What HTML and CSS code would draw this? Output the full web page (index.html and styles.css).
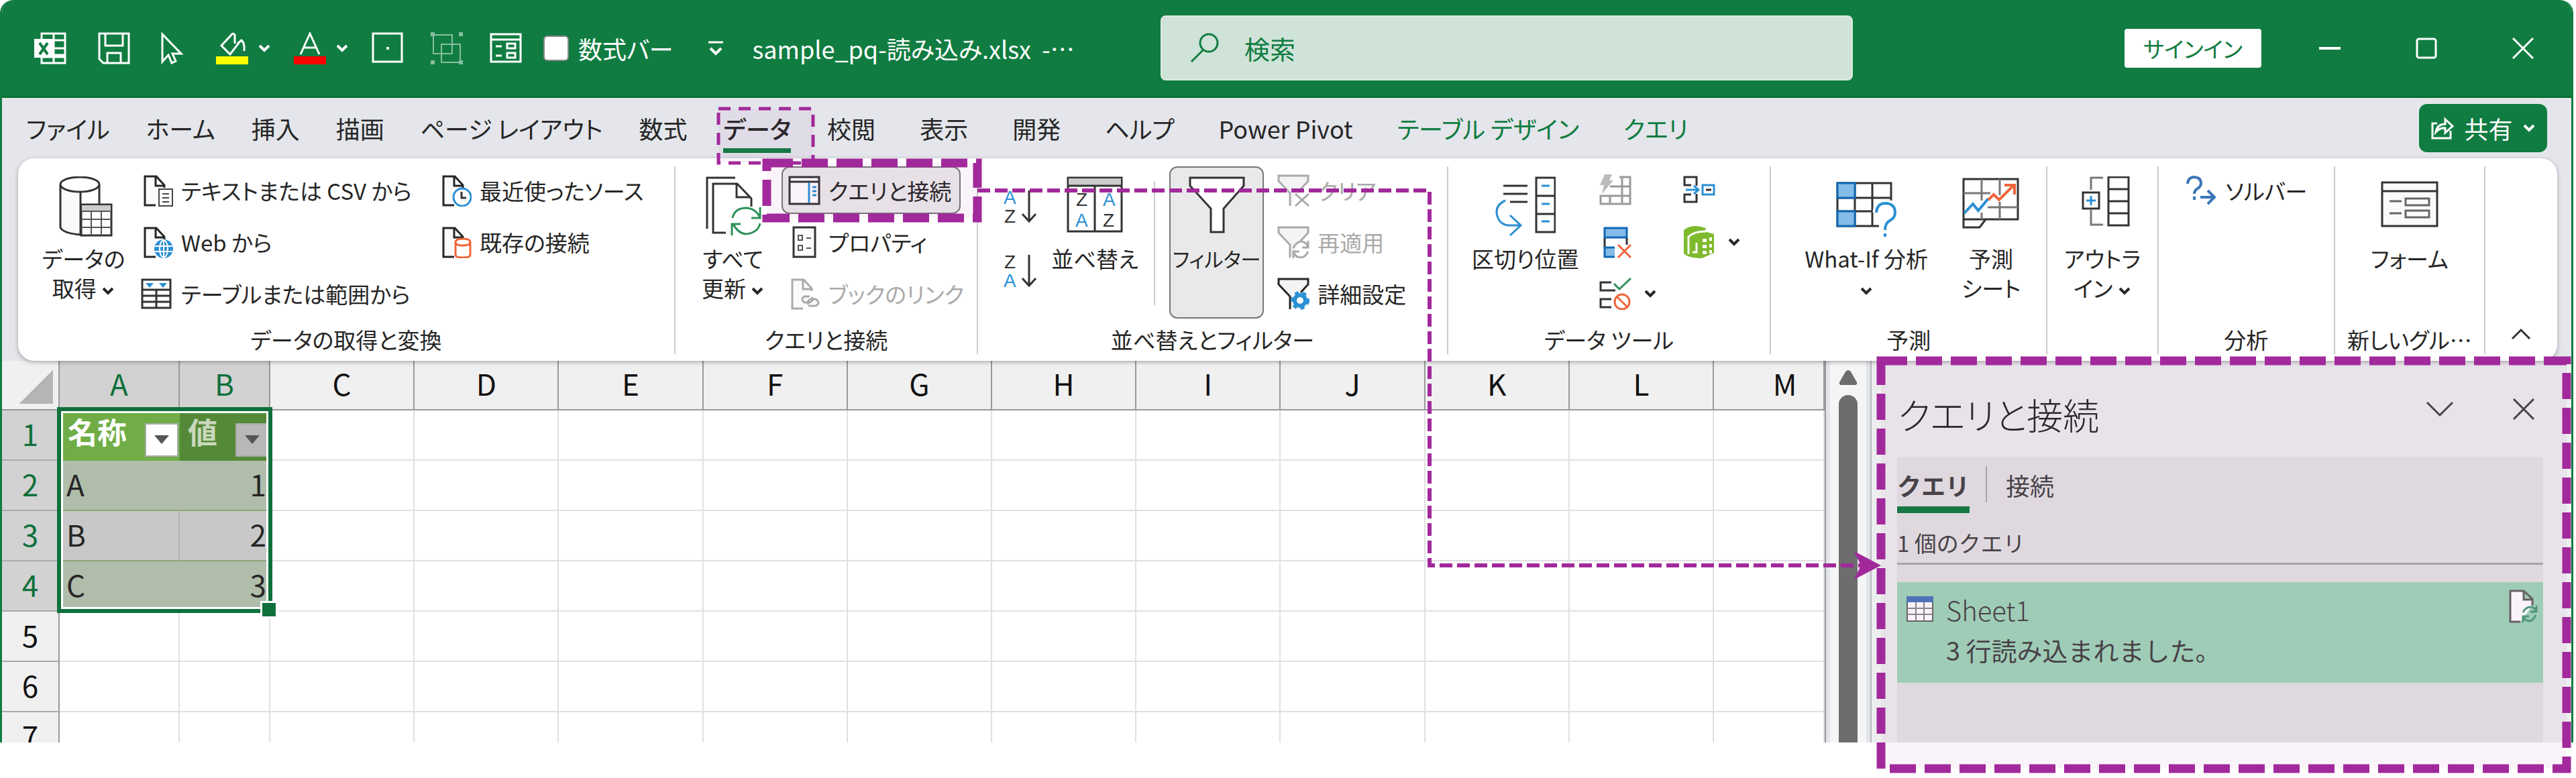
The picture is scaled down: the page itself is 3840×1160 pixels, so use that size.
FILE: index.html
```html
<!DOCTYPE html>
<html lang="ja">
<head>
    <meta charset="UTF-8">
    <meta name="viewport" content="width=device-width, initial-scale=1.0">
    <title>sample_pq-読み込み.xlsx</title>
    <link rel="stylesheet" href="styles.css">
</head>
<body>
    <!-- アイコン定義 -->
    <svg class="defs" aria-hidden="true">
        <symbol id="chev" viewBox="0 0 20 14"><path d="M3 3l7 7 7-7" fill="none" stroke="currentColor" stroke-width="4"/></symbol>
        <symbol id="page" viewBox="0 0 48 48"><path d="M22 46H6V3h17l12 13v4M22 3v14h12" fill="#fafafa" stroke="currentColor" stroke-width="3"/></symbol>
        <symbol id="funnel" viewBox="0 0 48 48"><path d="M19 47V28L2 10V2h44v8L35 22" fill="#f4f4f4" stroke="currentColor" stroke-width="3"/></symbol>
    </svg>

    <div class="app">
        <header class="titlebar">
            <div class="quick">
                <svg class="ic" viewBox="0 0 48 48"><path d="M11 2h35v44H11zM29 2v44M11 12h35M29 24h17M29 34h17M11 37h35" fill="none" stroke="#fff" stroke-width="3"/><path d="M0 10h28v28H0z" fill="#fff"/><path d="M8 16l12 17M20 16L8 33" stroke="#107c41" stroke-width="4"/></svg>
                <button class="qb save" aria-label="上書き保存"><svg class="ic" viewBox="0 0 48 48"><path d="M2 2h44v44H8l-6-6zM11 2v18h26V2M14 46V31h20v15" fill="none" stroke="#fff" stroke-width="3"/></svg></button>
                <button class="qb" aria-label="選択"><svg class="ic" viewBox="0 0 48 48"><path d="M8 3v41l9-10 5 12 6-3-5-11h13z" fill="none" stroke="#fff" stroke-width="3"/></svg></button>
                <button class="qb menu" aria-label="塗りつぶしの色"><svg class="ic" viewBox="0 0 48 48"><path d="M28 17V4q-3-4-6 1L8 20l13 13 13-17M32 17l6-5q5 4 4 16" fill="none" stroke="#fff" stroke-width="3"/><path d="M0 36h48v12H0z" fill="#ff0"/></svg><svg class="chev"><use href="#chev"/></svg></button>
                <button class="qb menu" aria-label="フォントの色"><svg class="ic" viewBox="0 0 48 48"><path d="M10 33L24 2l14 31M15 23h18" fill="none" stroke="#fff" stroke-width="3"/><path d="M0 36h48v12H0z" fill="red"/></svg><svg class="chev"><use href="#chev"/></svg></button>
                <button class="qb" aria-label="罫線"><svg class="ic" viewBox="0 0 48 48"><path d="M2 2h43v42H2z" fill="none" stroke="#fff" stroke-width="3"/><path d="M22 22h4v4h-4z" fill="#fff"/></svg></button>
                <button class="qb" aria-label="グループ化"><svg class="ic dim" viewBox="0 0 48 48"><path d="M4 4h28v28H4zM16 18h28v27H16z" fill="none" stroke="#fff" stroke-width="2"/><path d="M0 0h6v6H0zM42 0h6v6h-6zM0 42h6v6H0zM42 42h6v6h-6z" fill="#fff"/></svg></button>
                <button class="qb" aria-label="フォーム"><svg class="ic" viewBox="0 0 48 48"><path d="M2 3h44v41H2zM2 11h44M9 21h9M9 35h9M26 17h12v7H26zM26 31h12v7H26z" fill="none" stroke="#fff" stroke-width="3"/></svg></button>
                <label class="check"><input type="checkbox"> 数式バー</label>
                <button class="qb" aria-label="カスタマイズ"><svg class="ic" viewBox="0 0 48 48"><path d="M13 15h22" stroke="#fff" stroke-width="3"/><path d="M16 24l8 8 8-8" fill="none" stroke="#fff" stroke-width="4"/></svg></button>
                <span class="filename">sample_pq-読み込み.xlsx&nbsp; -…</span>
            </div>
            <div class="search">
                <svg class="ic" viewBox="0 0 48 48"><circle cx="30" cy="16" r="13" fill="none" stroke="#107c41" stroke-width="3"/><path d="M22 26L4 44" stroke="#107c41" stroke-width="3"/></svg>
                <input type="text" placeholder="検索" aria-label="検索">
            </div>
            <div class="window-btns">
                <button class="signin">サインイン</button>
                <button aria-label="最小化"><svg viewBox="0 0 32 32"><path d="M0 16h32" stroke="#fff" stroke-width="4"/></svg></button>
                <button aria-label="最大化"><svg viewBox="0 0 32 32"><rect x="2" y="2" width="28" height="28" rx="3" fill="none" stroke="#fff" stroke-width="3"/></svg></button>
                <button aria-label="閉じる"><svg viewBox="0 0 32 32"><path d="M1 1l30 30M31 1L1 31" stroke="#fff" stroke-width="3"/></svg></button>
            </div>
        </header>

        <nav class="tabs">
            <a href="#">ファイル</a>
            <a href="#">ホーム</a>
            <a href="#">挿入</a>
            <a href="#">描画</a>
            <a href="#">ページ レイアウト</a>
            <a href="#">数式</a>
            <a href="#" class="active">データ</a>
            <a href="#">校閲</a>
            <a href="#">表示</a>
            <a href="#">開発</a>
            <a href="#">ヘルプ</a>
            <a href="#">Power Pivot</a>
            <a href="#" class="ctx">テーブル デザイン</a>
            <a href="#" class="ctx">クエリ</a>
            <button class="share"><svg viewBox="0 0 36 36"><path d="M10 11H3v22h27V22M8 24q2-12 14-12V5l11 10-11 10v-7q-8-1-14 6z" fill="none" stroke="#fff" stroke-width="3"/></svg>共有<svg class="chev"><use href="#chev"/></svg></button>
        </nav>

        <section class="ribbon">
            <div class="group get">
                <div class="tools">
                    <button class="big">
                        <svg viewBox="0 0 90 90"><path d="M10 12v64q4 9 30 11V12M68 12v30" fill="#fafafa" stroke="#333" stroke-width="3"/><ellipse cx="39" cy="12" rx="29" ry="11" fill="#fff" stroke="#333" stroke-width="3"/><path d="M41 42h45v46H41z" fill="#fff" stroke="#333" stroke-width="3"/><path d="M42 43h43v8H42z" fill="#ccc"/><path d="M41 52h45M41 64h45M41 76h45M56 52v36M71 52v36" stroke="#555" stroke-width="2"/></svg>
                        <span>データの<br>取得 <svg class="chev"><use href="#chev"/></svg></span>
                    </button>
                    <div class="col wide">
                        <button class="small"><svg viewBox="0 0 48 48"><use href="#page"/><path d="M27 22h20v25H27zM32 29h10M32 35h10M32 41h10" fill="#fff" stroke="#444" stroke-width="2"/></svg>テキストまたは CSV から</button>
                        <button class="small"><svg viewBox="0 0 48 48"><use href="#page"/><circle cx="34" cy="34" r="14" fill="#2b8fd4"/><path d="M21 30h26M21 38h26M34 20v28" stroke="#fff" stroke-width="2"/><ellipse cx="34" cy="34" rx="6" ry="13" fill="none" stroke="#fff" stroke-width="2"/></svg>Web から</button>
                        <button class="small"><svg viewBox="0 0 48 48"><path d="M2 3h42v42H2zM2 18h42M2 27h42M2 36h42M23 18v27" fill="#fff" stroke="#333" stroke-width="3"/><path d="M7 8h12l-6 7zM27 8h12l-6 7z" fill="#2b8fd4"/></svg>テーブルまたは範囲から</button>
                    </div>
                    <div class="col">
                        <button class="small"><svg viewBox="0 0 48 48"><use href="#page"/><circle cx="34" cy="34" r="13" fill="#fff" stroke="#2b8fd4" stroke-width="3"/><path d="M33 26v9h7" fill="none" stroke="#333" stroke-width="3"/></svg>最近使ったソース</button>
                        <button class="small"><svg viewBox="0 0 48 48"><use href="#page"/><path d="M24 24q0-5 11-5t11 5v19q0 4-11 4t-11-4zq0 5 11 5t11-5" fill="#fff" stroke="#f0653a" stroke-width="3"/></svg>既存の接続</button>
                    </div>
                </div>
                <div class="caption">データの取得と変換</div>
            </div>

            <div class="group query">
                <div class="tools">
                    <button class="big">
                        <svg viewBox="0 0 90 90"><path d="M6 78V2h42M34 84H15V11h36l21 22v12M50 11v20h20" fill="none" stroke="#333" stroke-width="3"/><path d="M44 62q3-15 21-15 14 1 20 15M85 46v16H72M85 70q-3 14-21 16-12-1-19-15M43 88V71h13" fill="none" stroke="#2f9158" stroke-width="3"/></svg>
                        <span>すべて<br>更新 <svg class="chev"><use href="#chev"/></svg></span>
                    </button>
                    <div class="col">
                        <button class="small pressed"><svg viewBox="0 0 48 48"><path d="M2 4h44v40H2z" fill="#fff" stroke="#333" stroke-width="3"/><path d="M2 11h44" stroke="#333" stroke-width="3"/><path d="M31 12v31" stroke="#2b8fd4" stroke-width="3"/><path d="M36 19h6M36 25h6M36 31h6" stroke="#2b8fd4" stroke-width="3"/></svg>クエリと接続</button>
                        <button class="small"><svg viewBox="0 0 48 48"><path d="M8 2h32v44H8z" fill="#fafafa" stroke="#333" stroke-width="3"/><path d="M15 14h6v7h-6zM15 29h6v7h-6zM27 18h7M27 33h7" fill="none" stroke="#555" stroke-width="2"/></svg>プロパティ</button>
                        <button class="small off"><svg viewBox="0 0 48 48"><use href="#page"/><path d="M32 28h-8q-6 4 0 9h8q7-3 3-8M30 42h11q8-4 0-10h-8q-6 3-3 8" fill="none" stroke="#aaa" stroke-width="3"/></svg>ブックのリンク</button>
                    </div>
                </div>
                <div class="caption">クエリと接続</div>
            </div>

            <div class="group sort">
                <div class="tools">
                    <div class="az">
                        <button aria-label="昇順"><svg viewBox="0 0 48 48"><text x="0" y="20" class="blue">A</text><text x="1" y="48">Z</text><path d="M38 0v46M28 35l10 11 10-11" fill="none" stroke="#333" stroke-width="3"/></svg></button>
                        <button aria-label="降順"><svg viewBox="0 0 48 48"><text x="1" y="20">Z</text><text x="0" y="48" class="blue">A</text><path d="M38 0v46M28 35l10 11 10-11" fill="none" stroke="#333" stroke-width="3"/></svg></button>
                    </div>
                    <button class="big sortbtn">
                        <svg viewBox="0 0 90 90"><path d="M5 2h80v80H5z" fill="#fff" stroke="#333" stroke-width="3"/><path d="M6 3h78v10H6z" fill="#ccc"/><path d="M5 14h80M45 14v68" stroke="#333" stroke-width="3"/><text x="17" y="44">Z</text><text x="16" y="75" class="blue">A</text><text x="57" y="44" class="blue">A</text><text x="57" y="75">Z</text></svg>
                        <span>並べ替え</span>
                    </button>
                    <i class="rule"></i>
                    <button class="big filter">
                        <svg viewBox="0 0 90 90"><path d="M5 2h80v12L55 48v35H36V48L5 14z" fill="#fff" stroke="#333" stroke-width="3"/></svg>
                        <span>フィルター</span>
                    </button>
                    <div class="col">
                        <button class="small off"><svg viewBox="0 0 48 48"><use href="#funnel"/><path d="M27 29l20 18M47 29L27 47" stroke="#aaa" stroke-width="3"/></svg>クリア</button>
                        <button class="small off"><svg viewBox="0 0 48 48"><use href="#funnel"/><path d="M24 33q4-10 12-10 8 1 9 8M46 22v10h-9M46 38q-4 9-12 9-8-1-9-8M24 48V38h9" fill="none" stroke="#aaa" stroke-width="3"/></svg>再適用</button>
                        <button class="small"><svg viewBox="0 0 48 48"><use href="#funnel"/><circle cx="34" cy="34" r="8" fill="#fff" stroke="#2b8fd4" stroke-width="6"/><circle cx="34" cy="34" r="12" fill="none" stroke="#2b8fd4" stroke-width="4" stroke-dasharray="6 6"/></svg>詳細設定</button>
                    </div>
                </div>
                <div class="caption">並べ替えとフィルター</div>
            </div>

            <div class="group data">
                <div class="tools">
                    <button class="big">
                        <svg viewBox="0 0 90 90"><path d="M61 2h28v81H61zM61 29h28M61 56h28" fill="#fff" stroke="#333" stroke-width="3"/><path d="M12 14h36M12 26h36M22 38h26" stroke="#333" stroke-width="3"/><path d="M69 14h12M69 41h12M69 67h12" stroke="#2b8fd4" stroke-width="3"/><path d="M15 36Q1 42 2 55q3 17 18 18h18M22 58l16 15-16 15" fill="none" stroke="#2b8fd4" stroke-width="3"/></svg>
                        <span>区切り位置</span>
                    </button>
                    <div class="col marks">
                        <button class="small" aria-label="フラッシュ フィル"><svg viewBox="0 0 48 48"><path d="M2 32h44v12H2zM30 4h16v40M16 18h30M16 32v12M34 4v40" fill="none" stroke="#999" stroke-width="3"/><path d="M8 0h11l-4 9h6L4 29l3-13H1z" fill="#bbb"/></svg></button>
                        <button class="small" aria-label="重複の削除"><svg viewBox="0 0 48 48"><path d="M8 3h33v14H8z" fill="#85bbe8" stroke="#1068b5" stroke-width="3"/><path d="M8 18v14M41 18v10" stroke="#333" stroke-width="3"/><path d="M23 32H8v14h15" fill="#85bbe8" stroke="#1068b5" stroke-width="3"/><path d="M28 28l19 19M47 28L28 47" stroke="#f0653a" stroke-width="3"/></svg></button>
                        <button class="small" aria-label="データの入力規則"><svg viewBox="0 0 48 48"><path d="M18 7H2v12h22M18 32H2v12h16" fill="none" stroke="#333" stroke-width="3"/><path d="M22 9l8 8L47 1" fill="none" stroke="#2f9158" stroke-width="3"/><circle cx="34" cy="36" r="11" fill="#fff" stroke="#f0653a" stroke-width="3"/><path d="M26 28l16 16" stroke="#f0653a" stroke-width="3"/></svg><svg class="chev"><use href="#chev"/></svg></button>
                    </div>
                    <div class="col">
                        <button class="small" aria-label="統合"><svg viewBox="0 0 48 48"><path d="M20 17V4H2v12h10M20 29v12H2V30h10" fill="none" stroke="#333" stroke-width="3"/><path d="M4 23h18M16 17l7 6-7 6M29 16h17v14H29z" fill="none" stroke="#2b8fd4" stroke-width="3"/><path d="M34 23h8" stroke="#333" stroke-width="3"/></svg></button>
                        <button class="small" aria-label="データ モデル"><svg viewBox="0 0 48 48"><path d="M1 6Q14-4 34 3l-2 5 14 4v28L28 48Q8 48 1 41z" fill="#7fba2c"/><path d="M8 42V16q8-8 26-8M14 39h6V25" fill="none" stroke="#fff" stroke-width="3"/><path d="M29 19h6v5h-6zM39 17h4v5h-4zM29 28h6v5h-6zM39 27h4v5h-4zM29 37h6v5h-6zM39 36h4v5h-4z" fill="#fff"/></svg><svg class="chev"><use href="#chev"/></svg></button>
                    </div>
                </div>
                <div class="caption">データ ツール</div>
            </div>

            <div class="group forecast">
                <div class="tools">
                    <button class="big whatif">
                        <svg viewBox="0 0 90 90"><path d="M2 10h80v64H2z" fill="#fff"/><path d="M82 36V10H2v64h62M28 10v64M54 10v64M2 32h80M2 52h54" fill="none" stroke="#333" stroke-width="3"/><path d="M2 10h26v22H2zM2 52h26v22H2z" fill="#85bbe8" stroke="#1068b5" stroke-width="3"/><path d="M60 54q1-14 14-14 14 1 14 14 0 8-8 12-7 4-7 14" fill="none" stroke="#fff" stroke-width="11"/><path d="M60 54q1-14 14-14 14 1 14 14 0 8-8 12-7 4-7 14M73 85v5" fill="none" stroke="#2b8fd4" stroke-width="4"/></svg>
                        <span>What-If 分析<br><svg class="chev"><use href="#chev"/></svg></span>
                    </button>
                    <button class="big sheetbtn">
                        <svg viewBox="0 0 90 90"><path d="M4 4h81v60H4z" fill="#fff" stroke="#333" stroke-width="3"/><path d="M4 25h40M40 46h45M31 4v32M31 54v10M58 4v24M58 38v26" stroke="#777" stroke-width="3"/><path d="M4 64v12h24l9-12" fill="none" stroke="#333" stroke-width="3"/><path d="M5 55l13-14 8 10 15-18" fill="none" stroke="#2b8fd4" stroke-width="4"/><path d="M41 35l8-8 8 8 22-22M65 13h15v14" fill="none" stroke="#f0653a" stroke-width="4"/></svg>
                        <span>予測<br>シート</span>
                    </button>
                </div>
                <div class="caption">予測</div>
            </div>

            <div class="group center">
                <div class="tools">
                    <button class="big">
                        <svg viewBox="0 0 90 90"><path d="M54 1h30v72H54zM54 19h30M54 37h30M54 55h30" fill="#fff" stroke="#333" stroke-width="3"/><path d="M46 2H28v18M28 50v22h18" fill="none" stroke="#777" stroke-width="3"/><path d="M16 24h24v24H16z" fill="#fff" stroke="#333" stroke-width="3"/><path d="M21 36h14M28 29v14" stroke="#2b8fd4" stroke-width="3"/></svg>
                        <span>アウトラ<br>イン <svg class="chev"><use href="#chev"/></svg></span>
                    </button>
                </div>
                <div class="caption"></div>
            </div>

            <div class="group solver">
                <div class="tools">
                    <div class="col">
                        <button class="small"><svg viewBox="0 0 48 48"><path d="M3 14q1-10 10-10 10 1 10 9 0 5-5 8-5 3-5 8M13 33v5M22 34h20M33 24l10 10-10 10" fill="none" stroke="#3b76b8" stroke-width="4"/></svg>ソルバー</button>
                    </div>
                </div>
                <div class="caption">分析</div>
            </div>

            <div class="group center">
                <div class="tools">
                    <button class="big">
                        <svg viewBox="0 0 90 90"><path d="M4 9h82v65H4zM4 22h82" fill="#fafafa" stroke="#333" stroke-width="3"/><path d="M15 37h18M15 55h18M39 33h35v10H39zM39 51h35v10H39z" fill="none" stroke="#666" stroke-width="3"/></svg>
                        <span>フォーム</span>
                    </button>
                </div>
                <div class="caption">新しいグル…</div>
            </div>

            <div class="group collapse">
                <button aria-label="リボンを折りたたむ"><svg viewBox="0 0 30 20"><path d="M2 17L15 4l13 13" fill="none" stroke="#333" stroke-width="3"/></svg></button>
            </div>
        </section>

        <main class="work">
            <div class="sheet">
                <table>
                    <colgroup><col class="c-num"><col class="c-a"><col class="c-b"><col><col><col><col><col><col><col><col><col><col><col class="c-m"></colgroup>
                    <thead>
                        <tr><th class="corner"></th><th class="on">A</th><th class="on">B</th><th>C</th><th>D</th><th>E</th><th>F</th><th>G</th><th>H</th><th>I</th><th>J</th><th>K</th><th>L</th><th class="last">M</th></tr>
                    </thead>
                    <tbody>
                        <tr class="head"><th class="on">1</th><td><div>名称<button aria-label="名称フィルター"></button></div></td><td class="b"><div>値<button aria-label="値フィルター"></button></div></td><td></td><td></td><td></td><td></td><td></td><td></td><td></td><td></td><td></td><td></td><td></td></tr>
                        <tr class="band"><th class="on">2</th><td>A</td><td class="num">1</td><td></td><td></td><td></td><td></td><td></td><td></td><td></td><td></td><td></td><td></td><td></td></tr>
                        <tr class="plain"><th class="on">3</th><td>B</td><td class="num">2</td><td></td><td></td><td></td><td></td><td></td><td></td><td></td><td></td><td></td><td></td><td></td></tr>
                        <tr class="band"><th class="on">4</th><td>C</td><td class="num">3</td><td></td><td></td><td></td><td></td><td></td><td></td><td></td><td></td><td></td><td></td><td></td></tr>
                        <tr><th>5</th><td></td><td></td><td></td><td></td><td></td><td></td><td></td><td></td><td></td><td></td><td></td><td></td><td></td></tr>
                        <tr><th>6</th><td></td><td></td><td></td><td></td><td></td><td></td><td></td><td></td><td></td><td></td><td></td><td></td><td></td></tr>
                        <tr><th>7</th><td></td><td></td><td></td><td></td><td></td><td></td><td></td><td></td><td></td><td></td><td></td><td></td><td></td></tr>
                    </tbody>
                </table>
                <div class="selection"></div>
            </div>
            <div class="scroll">
                <svg viewBox="0 0 28 22"><path d="M14 0q3 0 5 4l8 14q1 4-3 4H4q-4 0-3-4L9 4q2-4 5-4z" fill="#6d6d6d"/></svg>
                <div class="thumb"></div>
            </div>
            <aside class="pane">
                <div class="pane-head">
                    <h2>クエリと接続</h2>
                    <button aria-label="オプション"><svg viewBox="0 0 42 32"><path d="M2 6l19 19L40 6" fill="none" stroke="#444" stroke-width="3"/></svg></button>
                    <button aria-label="閉じる"><svg viewBox="0 0 32 32"><path d="M1 1l30 30M31 1L1 31" stroke="#444" stroke-width="3"/></svg></button>
                </div>
                <div class="pane-body">
                    <div class="pane-tabs"><a href="#" class="cur">クエリ</a><a href="#">接続</a></div>
                    <p class="count">1 個のクエリ</p>
                    <div class="item">
                        <svg class="tbl" viewBox="0 0 40 38"><path d="M1 1h38v36H1z" fill="#fff" stroke="#666" stroke-width="2"/><path d="M0 0h40v9H0z" fill="#4a78b8"/><path d="M1 18h38M1 27h38M14 9v28M26 9v28" stroke="#888" stroke-width="2"/></svg>
                        <div class="item-text"><strong>Sheet1</strong><span>3 行読み込まれました。</span></div>
                        <svg class="load" viewBox="0 0 44 50"><path d="M18 48H3V2h20l13 12v10M23 2v13h13" fill="#fff" stroke="#666" stroke-width="3"/><path d="M22 34q4-8 11-8 6 0 8 6M42 24v9h-9M41 38q-4 9-10 9-6-1-8-6M22 49v-9h9" fill="none" stroke="#4b9c78" stroke-width="3"/></svg>
                    </div>
                </div>
            </aside>
        </main>
    </div>

    <!-- 説明用の囲みと矢印 -->
    <svg class="callouts" viewBox="0 0 3840 1160" aria-hidden="true">
        <g fill="#a2299b" fill-opacity=".05" stroke="#a2299b">
            <rect x="1071" y="162" width="141" height="81" stroke-width="5" stroke-dasharray="18 12"/>
            <rect x="1143" y="243" width="314" height="82" stroke-width="13" stroke-dasharray="39 13"/>
            <rect x="2804" y="538" width="1022" height="608" stroke-width="13" stroke-dasharray="39 13"/>
        </g>
        <path d="M1457 284H2131V843H2780" fill="none" stroke="#a2299b" stroke-width="6" stroke-dasharray="19 7"/>
        <path d="M2764 822l40 21-40 21 10-21z" fill="#a2299b"/>
    </svg>
</body>
</html>
```

FILE: styles.css
```css
* {
    box-sizing: border-box;
}

body {
    margin: 0;
    height: 100vh;
    position: relative;
    overflow: hidden;
    background: #fff;
    color: #262626;
    font-family: "Noto Sans CJK JP", "Noto Sans", sans-serif;
    font-size: 33px;
    font-feature-settings: "palt";
}

button {
    border: none;
    padding: 0;
    background: none;
    color: inherit;
    font: inherit;
    font-feature-settings: inherit;
    cursor: pointer;
}

a {
    color: inherit;
    text-decoration: none;
}

.defs {
    display: none;
}

.chev {
    width: 20px;
    height: 14px;
    flex: none;
    vertical-align: middle;
}

.app {
    height: calc(100vh - 53px);
    margin-right: 4px;
    display: flex;
    flex-direction: column;
    border: solid #107c41;
    border-width: 0 3px;
    border-radius: 20px 20px 0 0;
    background: #e4e6eb;
    overflow: hidden;
}

/* タイトルバー */
.titlebar {
    flex: none;
    height: 146px;
    display: grid;
    grid-template-columns: minmax(0, 1727fr) minmax(0, 1032fr) minmax(0, 1071fr);
    align-items: center;
    background: #107c41;
    border-bottom: 3px solid #00702f;
    color: #fff;
}

.quick {
    display: flex;
    align-items: center;
    padding-left: 48px;
    white-space: nowrap;
}

.ic {
    width: 48px;
    height: 48px;
    flex: none;
    display: block;
}

.dim {
    opacity: .5;
}

.qb {
    display: flex;
    align-items: center;
    gap: 14px;
    margin-left: 40px;
}

.save {
    margin-left: 47px;
}

.menu {
    margin-right: -6px;
}

.check {
    display: flex;
    align-items: center;
    gap: 14px;
    margin-left: 32px;
    font-size: 36px;
}

.check input {
    appearance: none;
    width: 38px;
    height: 38px;
    margin: 0;
    background: #fff;
    border: 2px solid #888;
    border-radius: 6px;
}

.filename {
    margin-left: 30px;
    font-size: 36px;
}

.search {
    height: 97px;
    display: flex;
    align-items: center;
    gap: 33px;
    padding-left: 40px;
    background: #cfe3d8;
    border: 2px solid #dbeae1;
    border-radius: 8px;
}

.search input {
    flex: 1;
    border: none;
    background: none;
    font: inherit;
    font-size: 38px;
}

.search input::placeholder {
    color: #107c41;
}

.window-btns {
    display: flex;
    align-items: center;
    justify-content: flex-end;
    gap: 112px;
    padding-right: 56px;
}

.window-btns svg {
    width: 32px;
    height: 32px;
    display: block;
}

.signin {
    width: 204px;
    height: 58px;
    margin-right: -26px;
    background: #fff;
    border-radius: 4px;
    color: #107c41;
}

/* リボンのタブ */
.tabs {
    flex: none;
    height: 90px;
    display: flex;
    align-items: center;
    gap: 54px;
    padding: 0 36px;
    font-size: 36px;
    white-space: nowrap;
}

.tabs a {
    line-height: 60px;
    border-bottom: 7px solid transparent;
    padding-top: 7px;
}

.tabs .active {
    font-weight: 500;
    border-color: #107c41;
}

.tabs .active + a ~ a {
    margin-left: 12px;
}

.tabs .ctx {
    color: #107c41;
}

.share {
    width: 191px;
    height: 72px;
    margin-left: auto;
    display: flex;
    align-items: center;
    justify-content: center;
    gap: 14px;
    background: #107c41;
    border-radius: 12px;
    color: #fff;
}

.share svg:first-child {
    width: 36px;
    height: 36px;
}

/* リボン */
.ribbon {
    flex: none;
    display: grid;
    grid-template-columns: 979fr 451fr 700fr 481fr 412fr 165fr 263fr 224fr 107fr;
    height: 302px;
    margin: 0 21px 0 24px;
    padding: 12px 0 10px;
    background: #fff;
    border-radius: 24px;
    box-shadow: 0 2px 6px rgba(0, 0, 0, .3);
    position: relative;
    z-index: 1;
}

.group {
    min-width: 0;
    display: flex;
    flex-direction: column;
    justify-content: space-between;
    border-right: 2px solid #ccc;
    white-space: nowrap;
}

.tools {
    height: 227px;
    display: flex;
    gap: 12px;
}

.caption {
    height: 44px;
    line-height: 44px;
    text-align: center;
}

.big {
    flex: none;
    height: 227px;
    padding-top: 15px;
    display: flex;
    flex-direction: column;
    align-items: center;
    gap: 10px;
    line-height: 44px;
}

.big > svg {
    width: 90px;
    height: 90px;
    flex: none;
}

.big > span {
    margin: 0 -20px;
}

.col {
    flex: none;
    display: flex;
    flex-direction: column;
    align-items: flex-start;
    gap: 6px;
}

.small {
    height: 71px;
    display: flex;
    align-items: center;
    gap: 12px;
    padding: 0 12px 0 10px;
}

.small > svg:first-child {
    width: 48px;
    height: 48px;
}

.off {
    color: #aaa;
}

.pressed {
    background: #ebebeb;
    border: 2px solid #777;
    border-radius: 12px;
    padding-left: 8px;
}

.get .tools {
    padding-left: 34px;
}

.get .big {
    width: 127px;
}

.get .wide {
    width: 433px;
}

.query .tools {
    padding-left: 26px;
}

.query .big {
    width: 120px;
}

.sort .tools {
    padding-left: 38px;
    gap: 21px;
}

.az {
    display: flex;
    flex-direction: column;
    gap: 48px;
    padding-top: 36px;
}

.az svg {
    width: 48px;
    height: 48px;
    display: block;
    overflow: visible;
}

.sort text {
    font-family: "Liberation Sans", sans-serif;
    font-size: 28px;
    fill: #333;
}

.sort .blue {
    fill: #2b8fd4;
}

.sortbtn {
    width: 134px;
}

.rule {
    width: 2px;
    height: 185px;
    margin-top: 22px;
    background: #ccc;
}

.filter {
    width: 141px;
    border: 2px solid #777;
    border-radius: 12px;
    background: #e9e9e9;
    padding-top: 13px;
    margin-right: -11px;
    font-size: 30px;
}

.data .tools {
    padding-left: 25px;
    gap: 10px;
}

.data .big {
    width: 180px;
}

.marks {
    width: 115px;
}

.data .small {
    padding-right: 0;
    gap: 18px;
}

.forecast .tools {
    padding-left: 27px;
    gap: 21px;
}

.whatif {
    width: 230px;
}

.sheetbtn {
    width: 100px;
}

.center .tools {
    justify-content: center;
}

.solver .tools {
    padding-left: 30px;
}

.collapse {
    justify-content: flex-end;
    align-items: center;
    padding-bottom: 10px;
    border: none;
}

.collapse svg {
    width: 30px;
    height: 20px;
}

/* シート */
.work {
    flex: 1;
    min-height: 0;
    display: grid;
    grid-template-columns: minmax(0, 2719fr) 66px minmax(0, 1045fr);
    grid-template-rows: minmax(0, 1fr);
}

.sheet {
    position: relative;
    overflow: hidden;
    border-right: 2px solid #999;
    background: #fff;
}

table {
    width: 100%;
    table-layout: fixed;
    border-collapse: separate;
    border-spacing: 0;
    font-size: 44px;
    line-height: 50px;
}

.c-num {
    width: 86px;
}

.c-a {
    width: 179px;
}

.c-b {
    width: 135px;
}

.c-m {
    width: 165px;
}

th,
td {
    height: 75px;
    padding: 0 4px 6px;
    border: solid #e0e0e0;
    border-width: 0 2px 2px 0;
    text-align: left;
}

th {
    background: #f0f0f0;
    border-color: #999;
    font-weight: 400;
    text-align: center;
    color: #111;
}

thead th {
    height: 74px;
}

tbody th {
    border-bottom-color: #aaa;
}

th.on {
    background: #d2d2d2;
    color: #0f703b;
}

.corner {
    background: linear-gradient(to bottom right, transparent 50%, #b5b5b5 50%) 26px 14px / 50px 50px no-repeat #f0f0f0;
}

th.last {
    padding-left: 52px;
}

td:nth-child(2) {
    padding-left: 10px;
}

.num {
    text-align: right;
}

.head td:nth-child(2),
.head td:nth-child(3) {
    padding: 0 0 0 12px;
    background: #70ad47;
    border-color: #70ad47;
    color: #fff;
    font-weight: 700;
}

.head td.b:nth-child(3) {
    background: #548937;
    border-color: #548937;
    color: #c8d8bd;
}

.head div {
    display: flex;
    justify-content: space-between;
    align-items: flex-start;
    height: 62px;
}

.head div button {
    width: 50px;
    height: 50px;
    margin-top: 13px;
    border: 2px solid #aaa;
    background: #fff;
    display: flex;
    align-items: center;
    justify-content: center;
}

.head div button::before {
    content: "";
    border: 11px solid transparent;
    border-top: 13px solid #555;
    border-bottom: 0;
}

.head .b button {
    background: #b8b8b8;
}

.band td:nth-child(2),
.band td:nth-child(3) {
    background: #b0bdab;
    border-color: #b0bdab;
    border-bottom-color: #8aa672;
}

.plain td:nth-child(2),
.plain td:nth-child(3) {
    background: #c8c8c8;
    border-right-color: #b0b0b0;
    border-bottom-color: #8aa672;
}

/* 選択範囲 */
.selection {
    position: absolute;
    left: 82px;
    top: 69px;
    width: 321px;
    height: 307px;
    border: 6px solid #0f703b;
    box-shadow: inset 0 0 0 3px #fff;
}

.selection::after {
    content: "";
    position: absolute;
    right: -14px;
    bottom: -14px;
    width: 20px;
    height: 20px;
    background: #0f703b;
    border: 3px solid #fff;
}

.scroll {
    display: flex;
    flex-direction: column;
    align-items: center;
    padding-top: 14px;
    gap: 15px;
    background: #f5f5f5;
    border: solid #e1e5e9;
    border-width: 0 6px;
}

.scroll svg {
    width: 28px;
    height: 22px;
    flex: none;
}

.thumb {
    flex: 1;
    width: 28px;
    border-radius: 14px 14px 0 0;
    background: #6d6d6d;
}

/* クエリと接続ウィンドウ */
.pane {
    display: flex;
    flex-direction: column;
    padding: 0 42px 0 38px;
    background: #edeeef;
    border-left: 2px solid #bbb;
}

.pane-head {
    height: 143px;
    display: flex;
    align-items: center;
    padding: 0 13px 0 1px;
    gap: 88px;
}

.pane-head h2 {
    flex: 1;
    margin: 16px 0 0;
    font-size: 54px;
    font-weight: 300;
}

.pane-head svg {
    height: 32px;
    display: block;
}

.pane-body {
    flex: 1;
    background: #e3e3e3;
    color: #444;
    font-feature-settings: normal;
}

.pane-tabs {
    display: flex;
    height: 84px;
    padding-top: 14px;
    font-size: 36px;
    line-height: 56px;
}

.pane-tabs a + a {
    height: 54px;
    margin-left: 24px;
    padding-left: 28px;
    border-left: 2px solid #aaa;
}

.pane-tabs .cur {
    height: 70px;
    font-weight: 700;
    border-bottom: 10px solid #107c41;
}

.count {
    height: 77px;
    margin: 0;
    padding-top: 16px;
    font-size: 33px;
    line-height: 56px;
    border-bottom: 3px solid #aaa;
}

.item {
    display: flex;
    align-items: flex-start;
    height: 150px;
    margin-top: 26px;
    padding: 11px 8px 0 14px;
    background: #a0d5b8;
}

.tbl {
    width: 40px;
    height: 38px;
    margin-top: 10px;
}

.item-text {
    flex: 1;
    display: flex;
    flex-direction: column;
    padding-left: 19px;
    font-size: 38px;
    line-height: 60px;
}

.item-text strong {
    font-size: 40px;
    font-weight: 300;
}

.load {
    width: 44px;
    height: 50px;
}

/* 囲みと矢印 */
.callouts {
    position: absolute;
    top: 0;
    left: 0;
    width: 100%;
    z-index: 2;
    pointer-events: none;
}
```
